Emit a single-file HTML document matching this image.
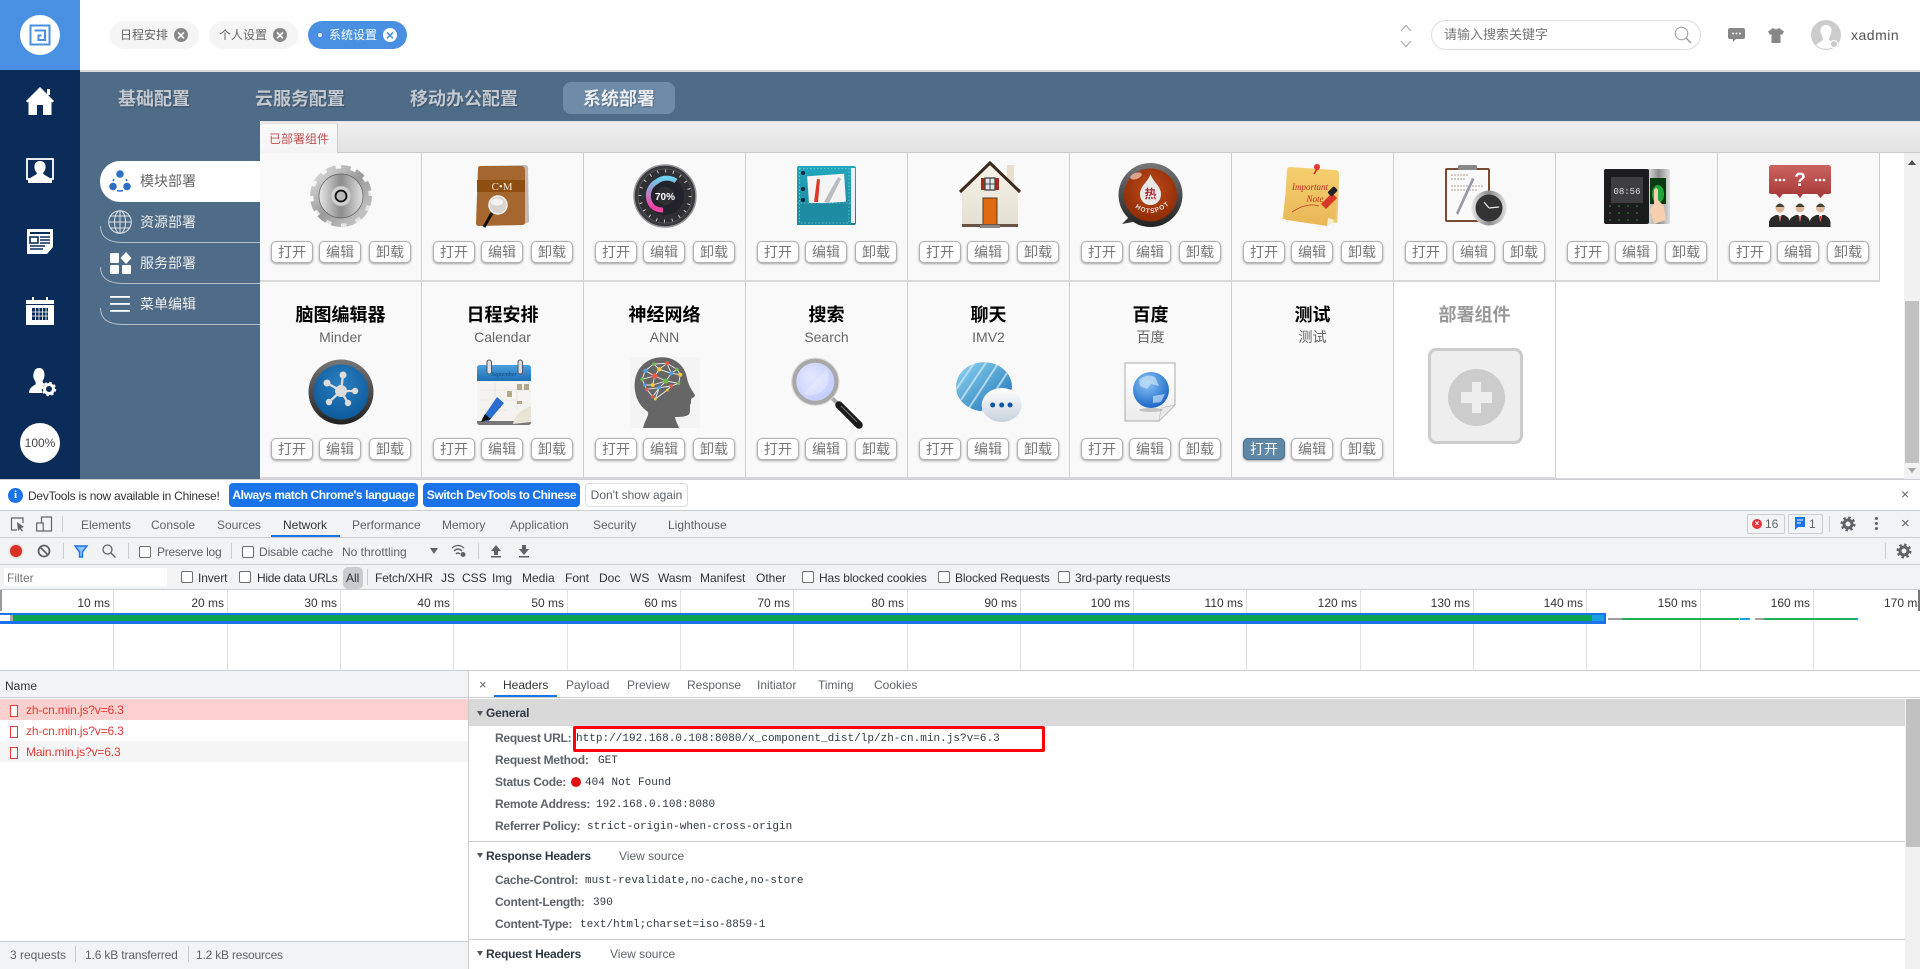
<!DOCTYPE html>
<html lang="zh-CN"><head><meta charset="utf-8"><title>系统部署</title>
<style>
*{box-sizing:border-box}
html,body{margin:0;padding:0;width:1920px;height:969px;overflow:hidden;background:#fff;font-family:"Liberation Sans","Noto Sans CJK SC",sans-serif}
.a,.t{position:absolute}
.t{white-space:nowrap;line-height:16px;height:16px}
svg{position:absolute;overflow:visible}
.d{font-size:12px;color:#5f6368}
.k{font-size:12px;color:#5f6368;font-weight:bold;letter-spacing:-.25px}
.m{font-family:"Liberation Mono","Noto Sans CJK SC",monospace;font-size:11px;color:#303942;margin-top:1px;letter-spacing:.02px}
.hb{font-size:12px;color:#303942;font-weight:bold;letter-spacing:-.2px}
.cell{position:absolute;width:162px;background:#f9f9f9;border-right:1px solid #cfcfcf;border-bottom:2px solid #d8d8d8}
.r1{top:153px;height:129px}
.r2{top:282px;height:197px}
.b{position:absolute;width:42px;height:22px;border:1px solid #b0b0b0;border-radius:5px;background:#fff;box-shadow:0 1px 2px rgba(0,0,0,.35);font-size:14px;line-height:20px;color:#777;text-align:center}
.r1 .b{top:88px}
.r2 .b{top:156px}
.x1{left:11px}.x2{left:59px}.x3{left:109px}
.ti{position:absolute;top:21px;left:0;width:161px;text-align:center;font-size:18px;font-weight:bold;line-height:24px;color:#000}
.su{position:absolute;top:47px;left:0;width:161px;text-align:center;font-size:14px;line-height:16px;color:#666}
.ic{left:45px;top:7px;width:72px;height:72px}
.r2 .ic{top:74px}
.nv{position:absolute;top:87px;font-size:18px;font-weight:bold;line-height:24px;color:#c3c9cf;white-space:nowrap;text-shadow:1px 1px 1px rgba(0,0,0,.25)}
.mt{position:absolute;left:140px;font-size:14px;line-height:18px;color:#eee;white-space:nowrap}
.tb{position:absolute;top:21px;height:28px;border-radius:14px;background:#f5f5f5}
.tb span{position:absolute;top:6px;font-size:12px;line-height:16px;color:#666;white-space:nowrap}
.tb i{position:absolute;top:7px;width:14px;height:14px;border-radius:50%;background:#888;color:#fff;font:bold 14px/14px "Liberation Sans",sans-serif;text-align:center}
.cb{position:absolute;width:12px;height:12px;margin:1px 0 0 1px;border:1px solid #6e6e6e;border-radius:2px;background:#fff}
.sp{position:absolute;width:1px;background:#ccc}
.lb{position:absolute;top:595px;width:57px;text-align:right;font-size:12px;line-height:16px;color:#333}
.tk{position:absolute;top:590px;height:80px;width:1px;background:#e0e0e0}
.btn{position:absolute;top:483px;height:24px;border-radius:4px;background:#1a73e8;color:#fff;font-size:12px;font-weight:bold;line-height:24px;text-align:center;white-space:nowrap;letter-spacing:-.4px}
.nm{position:absolute;left:26px;font-size:12px;line-height:16px;color:#e53935;white-space:nowrap;letter-spacing:-.15px}
.bx{position:absolute;left:10px;width:8px;height:12px;border:1px solid #e53935;background:#fff}
.f{font-size:12px;color:#333;margin-top:1px;letter-spacing:-.12px}
</style></head>
<body>
<svg width="0" height="0" style="position:absolute"><defs>
<linearGradient id="metal" x1="0" y1="0" x2="1" y2="1"><stop offset="0" stop-color="#e2e2e2"/><stop offset=".5" stop-color="#9a9a9a"/><stop offset="1" stop-color="#cfcfcf"/></linearGradient>
<linearGradient id="metal2" x1="0" y1="0" x2="1" y2="0"><stop offset="0" stop-color="#e6e6e6"/><stop offset=".5" stop-color="#8c8c8c"/><stop offset="1" stop-color="#e0e0e0"/></linearGradient>
<linearGradient id="teal" x1="0" y1="0" x2="0" y2="1"><stop offset="0" stop-color="#23a8bf"/><stop offset="1" stop-color="#1b7f95"/></linearGradient>
<linearGradient id="pk" x1="0" y1="0" x2="0" y2="1"><stop offset="0" stop-color="#6cd0ee"/><stop offset="1" stop-color="#f043a8"/></linearGradient>
<radialGradient id="red" cx=".5" cy=".4" r=".6"><stop offset="0" stop-color="#c14a1c"/><stop offset="1" stop-color="#8f2c05"/></radialGradient>
<linearGradient id="rim" x1="0" y1="0" x2="0" y2="1"><stop offset="0" stop-color="#777"/><stop offset="1" stop-color="#222"/></linearGradient>
<linearGradient id="note" x1="0" y1="0" x2="0" y2="1"><stop offset="0" stop-color="#f6cf6e"/><stop offset="1" stop-color="#e8b757"/></linearGradient>
<linearGradient id="rd" x1="0" y1="0" x2="0" y2="1"><stop offset="0" stop-color="#cc6460"/><stop offset="1" stop-color="#a53836"/></linearGradient>
<radialGradient id="blu" cx=".5" cy=".35" r=".65"><stop offset="0" stop-color="#2b7fc0"/><stop offset="1" stop-color="#0c5a9c"/></radialGradient>
<linearGradient id="calh" x1="0" y1="0" x2="0" y2="1"><stop offset="0" stop-color="#4a9fdc"/><stop offset="1" stop-color="#1e6fb5"/></linearGradient>
<radialGradient id="lens" cx=".4" cy=".4" r=".7"><stop offset="0" stop-color="#e6e8ff"/><stop offset="1" stop-color="#bcc8fa"/></radialGradient>
<linearGradient id="ball" x1="0" y1="0" x2="1" y2="1"><stop offset="0" stop-color="#8fd6f5"/><stop offset="1" stop-color="#1a6fb0"/></linearGradient>
<linearGradient id="bub" x1="0" y1="0" x2="0" y2="1"><stop offset="0" stop-color="#fff"/><stop offset="1" stop-color="#c8d2dc"/></linearGradient>
<radialGradient id="glob" cx=".4" cy=".3" r=".75"><stop offset="0" stop-color="#8cc6f5"/><stop offset="1" stop-color="#1460c4"/></radialGradient>
<linearGradient id="grey" x1="0" y1="0" x2="0" y2="1"><stop offset="0" stop-color="#fff"/><stop offset="1" stop-color="#ececec"/></linearGradient>
<linearGradient id="wall" x1="0" y1="0" x2="0" y2="1"><stop offset="0" stop-color="#f8f4ea"/><stop offset="1" stop-color="#e4dfd2"/></linearGradient>
</defs></svg>

<!-- sidebar -->
<div class="a" style="left:0;top:0;width:80px;height:480px;background:#0b2c58"></div>
<div class="a" style="left:0;top:0;width:80px;height:70px;background:#4a90e2"></div>
<div class="a" style="left:20px;top:15px;width:40px;height:40px;border-radius:50%;background:#fff"></div>
<svg style="left:29px;top:24px" width="22" height="22" viewBox="0 0 22 22" fill="none" stroke="#4a90e2" stroke-width="2"><rect x="1.500" y="1.500" width="19" height="19"/><path d="M5.500 6.500H16V16H9.500V11.500H12.500"/></svg>
<svg style="left:26px;top:87px" width="28" height="28" viewBox="0 0 28 28" fill="#fff"><path d="M14 0L28 14L26.500 15.500L25.500 15V28H17V18H11V28H2.500V15L1.500 15.500L0 14Z"/><rect x="21" y="2" width="3" height="6"/></svg>
<svg style="left:26px;top:158px" width="28" height="26" viewBox="0 0 28 26"><rect x="1" y="1" width="26" height="20" fill="none" stroke="#fff" stroke-width="1.800"/><path d="M14 3C18 3 20 6 19.500 10C19.300 12 18 14 17 15C17 17 22 18 26 22V25H2V22C6 18 11 17 11 15C10 14 8.700 12 8.500 10C8 6 10 3 14 3Z" fill="#fff"/></svg>
<svg style="left:27px;top:228px" width="26" height="26" viewBox="0 0 26 26"><path d="M0 1H26V19L20 26H0Z" fill="#fff"/><rect x="3" y="4" width="20" height="2" fill="#0b2c58"/><rect x="3" y="9" width="8" height="6" fill="none" stroke="#0b2c58" stroke-width="1.600"/><path d="M13 9H23M13 12H23M13 15H23M3 18H18M3 21H16" stroke="#0b2c58" stroke-width="1.400"/></svg>
<svg style="left:26px;top:297px" width="28" height="28" viewBox="0 0 28 28"><rect x="0" y="3" width="28" height="25" fill="#fff"/><rect x="6" y="0" width="2" height="5" fill="#fff"/><rect x="20" y="0" width="2" height="5" fill="#fff"/><rect x="0" y="7" width="28" height="1" fill="#0b2c58"/><g fill="#0b2c58"><rect x="6" y="11" width="16" height="12"/></g><path d="M9.500 11V23M13 11V23M16.500 11V23M20 11V23M6 15H22M6 19H22" stroke="#fff" stroke-width=".8"/></svg>
<svg style="left:29px;top:368px" width="27" height="28" viewBox="0 0 27 28"><path d="M10 0C14 0 15.500 3 15.500 7C15.500 10 14 12 13.500 13.500C13.500 15 15 15.500 16.500 16.300C13 18 12 22 13.500 25H0C0 21 2 19 6.500 16.500C7 15 6.500 13.500 5.500 12C4.500 10 4 8.500 4.500 6C5 2 7 0 10 0Z" fill="#fff"/><circle cx="20" cy="21" r="4.500" fill="none" stroke="#fff" stroke-width="3"/><circle cx="20" cy="21" r="6.200" fill="none" stroke="#fff" stroke-width="2" stroke-dasharray="2.500 2.370"/></svg>
<div class="a" style="left:20px;top:423px;width:40px;height:40px;border-radius:50%;background:#fff;text-align:center;font-size:12px;line-height:40px;color:#444">100%</div>

<!-- header -->
<div class="a" style="left:80px;top:70px;width:1840px;height:2px;background:#dcdcdc"></div>
<div class="tb" style="left:110px;width:89px"><span style="left:10px">日程安排</span><i style="left:64px">×</i></div>
<div class="tb" style="left:209px;width:89px"><span style="left:10px">个人设置</span><i style="left:64px">×</i></div>
<div class="tb" style="left:308px;width:99px;background:#4a90e2"><span style="left:21px;color:#fff">系统设置</span><b class="a" style="left:10px;top:12px;width:4px;height:4px;border-radius:50%;background:#fff"></b><i style="left:75px;background:#fff;color:#4a90e2">×</i></div>
<svg style="left:1400px;top:23px" width="12" height="26" viewBox="0 0 12 26" fill="none" stroke="#aaa" stroke-width="1.200"><path d="M1 8L6 2.500L11 8M1 18L6 23.500L11 18"/></svg>
<div class="a" style="left:1431px;top:20px;width:270px;height:30px;border:1px solid #ddd;border-radius:15px;background:#fff"></div>
<div class="t" style="left:1444px;top:27px;font-size:13px;color:#777">请输入搜索关键字</div>
<svg style="left:1674px;top:26px" width="18" height="18" viewBox="0 0 18 18" fill="none" stroke="#999" stroke-width="1"><circle cx="7.500" cy="7.500" r="6.300"/><path d="M12 12L17 17" stroke-width="1.400"/></svg>
<svg style="left:1728px;top:28px" width="17" height="15" viewBox="0 0 17 15"><path d="M2 0H15Q17 0 17 2V9Q17 11 15 11H8L5 14V11H2Q0 11 0 9V2Q0 0 2 0Z" fill="#888"/><g fill="#fff"><circle cx="5" cy="5.500" r="1"/><circle cx="8.500" cy="5.500" r="1"/><circle cx="12" cy="5.500" r="1"/></g></svg>
<svg style="left:1768px;top:28px" width="16" height="15" viewBox="0 0 16 15"><path d="M5 0L8 1.500L11 0L16 3.500L14 7L12.500 6V15H3.500V6L2 7L0 3.500Z" fill="#888"/></svg>
<svg style="left:1811px;top:20px" width="30" height="30" viewBox="0 0 30 30"><circle cx="15" cy="15" r="15" fill="#ccc"/><path d="M15 5C19 5 21 8 20.500 12C20 15 18 17 18 19C18 21 22 22 25 25A15 15 0 0 1 5 25C8 22 12 21 12 19C12 17 10 15 9.500 12C9 8 11 5 15 5Z" fill="#fff"/><circle cx="23" cy="24" r="3.500" fill="#ccc" stroke="#fff"/></svg>
<div class="t" style="left:1851px;top:27px;font-size:14px;color:#555;letter-spacing:.5px">xadmin</div>

<!-- nav band -->
<div class="a" style="left:80px;top:72px;width:1840px;height:49px;background:#4e6b87"></div>
<div class="a" style="left:80px;top:121px;width:180px;height:359px;background:#4e6b87"></div>
<div class="nv" style="left:118px">基础配置</div>
<div class="nv" style="left:255px">云服务配置</div>
<div class="nv" style="left:410px">移动办公配置</div>
<div class="a" style="left:563px;top:82px;width:112px;height:32px;border-radius:8px;background:#6e8ba8"></div>
<div class="nv" style="left:583px;color:#eceff2">系统部署</div>

<!-- side menu -->
<svg style="left:100px;top:202px" width="160" height="124" viewBox="0 0 160 124" fill="none" stroke="#b4bfca" stroke-width="1"><path d="M.5 24Q.5 40 22 40.500H160M.5 65Q.5 81 22 81.500H160M.5 106Q.5 122 22 122.500H160"/></svg>
<div class="a" style="left:100px;top:161px;width:160px;height:41px;background:#fff;border-radius:20px 0 0 20px"></div>
<svg style="left:109px;top:170px" width="22" height="22" viewBox="0 0 22 22"><g fill="#2d6fc1"><circle cx="11" cy="4" r="3.800"/><circle cx="4" cy="16.500" r="3.800"/><circle cx="18" cy="16.500" r="3.800"/></g><path d="M5 9A9 9 0 0 0 4 11M17 9A9 9 0 0 1 18 11M8 20.500A9 9 0 0 0 14 20.500" stroke="#2d6fc1" fill="none" stroke-width="1.500"/></svg>
<div class="mt" style="top:172px;color:#666">模块部署</div>
<svg style="left:108px;top:210px" width="24" height="24" viewBox="0 0 24 24" fill="none" stroke="#dfe4ea" stroke-width="1"><circle cx="12" cy="12" r="11.300"/><ellipse cx="12" cy="12" rx="5.500" ry="11.300"/><path d="M12 .7V23.300M.7 12H23.300M2.500 6H21.500M2.500 18H21.500"/></svg>
<div class="mt" style="top:213px">资源部署</div>
<svg style="left:110px;top:252px" width="22" height="22" viewBox="0 0 22 22" fill="#fff"><rect x="0" y="1" width="9" height="10" rx="1"/><path d="M16 0L21.500 6L16 12L10.500 6Z"/><rect x="0" y="13" width="9" height="9" rx="1"/><rect x="12" y="13" width="9" height="9" rx="1"/></svg>
<div class="mt" style="top:254px">服务部署</div>
<svg style="left:110px;top:296px" width="20" height="16" viewBox="0 0 20 16" fill="#fff"><rect y="0" width="20" height="1.800"/><rect y="7" width="20" height="1.800"/><rect y="14" width="20" height="1.800"/></svg>
<div class="mt" style="top:295px">菜单编辑</div>

<!-- content strip -->
<div class="a" style="left:260px;top:121px;width:1660px;height:32px;background:linear-gradient(#efefef,#e3e3e3);border-top:1px solid #ddd;border-bottom:1px solid #ccc;border-top-left-radius:4px"></div>
<div class="a" style="left:260px;top:123px;width:78px;height:30px;background:linear-gradient(#fafafa,#f4f4f4);border-right:1px solid #ccc;border-top:1px solid #ddd;border-top-left-radius:4px;font-size:12px;line-height:30px;color:#c0504d;padding-left:9px;white-space:nowrap">已部署组件</div>

<!-- row 1 -->
<div class="cell r1" style="left:260px"><svg class="ic" viewBox="0 0 72 72"><circle cx="37" cy="38" r="29" fill="#ccc" opacity=".45"/><circle cx="36" cy="36" r="28.500" fill="none" stroke="url(#metal)" stroke-width="5" stroke-dasharray="9.500 5.420"/><circle cx="36" cy="36" r="27.500" fill="url(#metal)"/><circle cx="36" cy="36" r="22" fill="url(#metal2)" stroke="#666" stroke-width=".7"/><circle cx="36" cy="36" r="10" fill="#d0d0d0" stroke="#aaa" stroke-width=".5"/><circle cx="36" cy="36" r="5.500" fill="#bbb" stroke="#111" stroke-width="1.800"/></svg><div class="b x1">打开</div><div class="b x2">编辑</div><div class="b x3">卸载</div></div>

<div class="cell r1" style="left:422px"><svg class="ic" viewBox="0 0 72 72"><path d="M12 6L58 5Q62 6 61 10L62 62L55 65Z" fill="#bbb"/><path d="M11 8Q11 6 14 6L55 6Q58 7 58 10L58 62Q58 65 55 65L12 66Q9 66 9 63Z" fill="#a5672f"/><rect x="10" y="20" width="48" height="12" fill="#8e4d11"/><text x="35" y="30" font-family="Liberation Serif,serif" font-size="11" fill="#f2ead8" text-anchor="middle">C•M</text><path d="M25 53L17 67" stroke="#111" stroke-width="3"/><circle cx="31" cy="45" r="9" fill="#d8d4d0" stroke="#f2f2f2" stroke-width="1.500"/><ellipse cx="30" cy="42" rx="6" ry="3.500" fill="#f4f2f0"/></svg><div class="b x1">打开</div><div class="b x2">编辑</div><div class="b x3">卸载</div></div>

<div class="cell r1" style="left:584px"><svg class="ic" viewBox="0 0 72 72"><circle cx="36" cy="36" r="31" fill="#3a3a3e" stroke="#999" stroke-width="1.500"/><circle cx="36" cy="36" r="27" fill="#2e2e33" stroke="#666" stroke-width=".6"/><circle cx="36" cy="36" r="25" fill="none" stroke="#ccc" stroke-width="3" stroke-dasharray="1 6.850"/><circle cx="36" cy="36" r="14" fill="none" stroke="#22222a" stroke-width="10"/><path d="M47 21A16 16 0 0 0 28 21.500A16 16 0 0 0 24 47" fill="none" stroke="url(#pk)" stroke-width="5"/><path d="M24 47A16 16 0 0 0 34 50" fill="none" stroke="#f043a8" stroke-width="5"/><text x="36" y="40" font-size="10" font-weight="bold" fill="#fff" text-anchor="middle">70%</text></svg><div class="b x1">打开</div><div class="b x2">编辑</div><div class="b x3">卸载</div></div>

<div class="cell r1" style="left:746px"><svg class="ic" viewBox="0 0 72 72"><rect x="6" y="6" width="59" height="59" rx="2" fill="url(#teal)"/><rect x="60" y="8" width="4" height="55" fill="#eef"/><rect x="17" y="15" width="37" height="28" fill="#f4f4f4" transform="rotate(-4 35 28)"/><path d="M23 42L26 19L29 19.500L27 42Z" fill="#d83a2a"/><path d="M33 42L47 17L50 19L38 43Z" fill="#b8bcc0"/><rect x="6" y="43" width="54" height="22" fill="#1d8ba2"/><path d="M8.500 8.500H58V63H8.500Z M6 43H60" fill="none" stroke="#a8dfe8" stroke-width=".6" stroke-dasharray="1.500 2"/><circle cx="12" cy="13" r="2" fill="#123"/><circle cx="12" cy="29" r="2" fill="#123"/><circle cx="12" cy="40" r="2" fill="#123"/></svg><div class="b x1">打开</div><div class="b x2">编辑</div><div class="b x3">卸载</div></div>

<div class="cell r1" style="left:908px"><svg class="ic" viewBox="0 0 72 72"><rect x="54" y="5" width="7" height="24" fill="#e8e0cc"/><path d="M37 4L65 32V66H9V32Z" fill="url(#wall)"/><path d="M7 32L37 3L67 32" fill="none" stroke="#3c2a1e" stroke-width="3"/><rect x="30" y="38" width="14" height="27" fill="#e06a12" stroke="#5a3a20"/><rect x="28" y="18" width="4" height="12" fill="#a82a1a"/><rect x="42" y="18" width="4" height="12" fill="#a82a1a"/><rect x="32" y="18" width="10" height="12" fill="#dfe4e8" stroke="#444" stroke-width="1.300"/><path d="M37 18V30M32 24H42" stroke="#444"/><rect x="9" y="64" width="56" height="3" fill="#6b5344"/><rect x="27" y="65" width="20" height="3" fill="#888"/></svg><div class="b x1">打开</div><div class="b x2">编辑</div><div class="b x3">卸载</div></div>

<div class="cell r1" style="left:1070px"><svg class="ic" viewBox="0 0 72 72"><path d="M7 64L16 55L18 62Z" fill="#333"/><circle cx="35.500" cy="35" r="32" fill="url(#rim)"/><circle cx="35.500" cy="35" r="26.500" fill="url(#red)"/><ellipse cx="21" cy="16" rx="6" ry="3" fill="#f2c8b4" opacity=".75" transform="rotate(-20 21 16)"/><path d="M35.500 14C38 22 46 26 46 34C46 41 41 45 35.500 45C30 45 25 41 25 34C25 26 33 22 35.500 14Z" fill="#e8e8e8"/><text x="35.500" y="38" font-size="12" font-weight="bold" fill="#b52a3a" text-anchor="middle" font-family="Noto Sans CJK SC,sans-serif">热</text><path id="hp" d="M16 44Q35 62 55 44" fill="none"/><text font-size="6.500" font-weight="bold" fill="#f2e6de" letter-spacing="1"><textPath href="#hp" startOffset="12%">HOTSPOT</textPath></text></svg><div class="b x1">打开</div><div class="b x2">编辑</div><div class="b x3">卸载</div></div>

<div class="cell r1" style="left:1232px"><svg class="ic" viewBox="0 0 72 72"><path d="M9 12L60 14L63 60L8 62Z" fill="#eec772" transform="rotate(6 35 36)"/><path d="M10 10Q10 7 13 7L58 10Q62 10 62 14L58 60L50 66L10 60Q7 60 7 56Z" fill="url(#note)"/><path d="M50 66L58 60L51 58Z" fill="#f7edc9"/><circle cx="40" cy="7" r="3" fill="#e33"/><path d="M40 9L37 14" stroke="#c22" stroke-width="1.500"/><text x="33" y="30" font-family="Liberation Serif,serif" font-style="italic" font-size="9" fill="#c22e1e" text-anchor="middle">Important</text><text x="38" y="42" font-family="Liberation Serif,serif" font-style="italic" font-size="9" fill="#c22e1e" text-anchor="middle">Note</text><path d="M15 52Q30 42 42 46" fill="none" stroke="#c6432e" stroke-width=".8"/><path d="M44 44L55 33L60 38L49 49Z" fill="#d8362a"/><rect x="53" y="27" width="6" height="9" rx="1.500" fill="#222" transform="rotate(45 56 31)"/></svg><div class="b x1">打开</div><div class="b x2">编辑</div><div class="b x3">卸载</div></div>

<div class="cell r1" style="left:1394px"><svg class="ic" viewBox="0 0 72 72"><rect x="6" y="8" width="45" height="54" rx="2" fill="#7a4a35"/><rect x="8" y="10" width="41" height="50" fill="#fafafa"/><rect x="19" y="5" width="19" height="5" rx="1.500" fill="#888"/><path d="M12 15H30M12 19H26M12 26H44M12 30H38" stroke="#cbbcb0" stroke-width="1.500" stroke-dasharray="2 1"/><path d="M17 53L33 18L35.500 19L19 55Z" fill="#99a"/><circle cx="50" cy="48" r="17.500" fill="url(#metal2)"/><circle cx="50" cy="48" r="13.500" fill="#333"/><path d="M50 48L45 42M50 48L60 47" stroke="#eee" stroke-width="1.200"/></svg><div class="b x1">打开</div><div class="b x2">编辑</div><div class="b x3">卸载</div></div>

<div class="cell r1" style="left:1556px"><svg class="ic" viewBox="0 0 72 72"><rect x="46" y="9" width="23" height="55" rx="2" fill="url(#metal2)"/><rect x="3" y="9" width="45" height="55" rx="2" fill="#1c1c1e"/><rect x="10" y="17" width="32" height="26" fill="#3e3e40"/><text x="26" y="34" font-size="9" fill="#ddd" text-anchor="middle" font-family="Liberation Mono,monospace">08:56</text><g fill="#2ca02c"><circle cx="9" cy="46" r=".8"/><circle cx="18" cy="46" r=".8"/><circle cx="27" cy="46" r=".8"/><circle cx="36" cy="46" r=".8"/><circle cx="9" cy="53" r=".8"/><circle cx="18" cy="53" r=".8"/><circle cx="27" cy="53" r=".8"/><circle cx="36" cy="53" r=".8"/><circle cx="9" cy="60" r=".8"/><circle cx="18" cy="60" r=".8"/><circle cx="27" cy="60" r=".8"/><circle cx="36" cy="60" r=".8"/></g><rect x="49" y="18" width="16" height="26" fill="#0a3a12"/><ellipse cx="57" cy="34" rx="6" ry="9" fill="#1fa83a"/><path d="M53 30Q55 26 57 30L57 40L63 46L65 60L53 64L49 50L53 44Z" fill="#f6cfae"/></svg><div class="b x1">打开</div><div class="b x2">编辑</div><div class="b x3">卸载</div></div>

<div class="cell r1" style="left:1718px"><svg class="ic" viewBox="0 0 72 72"><path d="M8 5H66Q68 5 68 8V32Q68 34 66 34H61L57.500 38L54 34H40L37 38L34 34H20L16.500 38L13 34H8Q6 34 6 32V8Q6 5 8 5Z" fill="url(#rd)"/><g fill="#fff"><circle cx="13" cy="20" r="1.300"/><circle cx="17" cy="20" r="1.300"/><circle cx="21" cy="20" r="1.300"/><circle cx="53" cy="20" r="1.300"/><circle cx="57" cy="20" r="1.300"/><circle cx="61" cy="20" r="1.300"/></g><text x="37" y="26" font-size="19" font-weight="bold" fill="#fff" text-anchor="middle">?</text><g><path d="M6 67V62Q7 57 13 55H21Q26 57 27 62V67Z" fill="#2a2a2a"/><path d="M15.500 55H18.500L17 62Z" fill="#fff"/><path d="M16.300 56H17.700L17 62Z" fill="#d62020"/><circle cx="17" cy="48" r="4.500" fill="#dcb79a"/><path d="M12.500 47Q17 40 21.500 47" fill="#443"/></g><g transform="translate(20 0)"><path d="M6 67V62Q7 57 13 55H21Q26 57 27 62V67Z" fill="#2a2a2a"/><path d="M15.500 55H18.500L17 62Z" fill="#fff"/><path d="M16.300 56H17.700L17 62Z" fill="#d62020"/><circle cx="17" cy="48" r="4.500" fill="#dcb79a"/><path d="M12.500 47Q17 40 21.500 47" fill="#443"/></g><g transform="translate(40.500 0)"><path d="M6 67V62Q7 57 13 55H21Q26 57 27 62V67Z" fill="#2a2a2a"/><path d="M15.500 55H18.500L17 62Z" fill="#fff"/><path d="M16.300 56H17.700L17 62Z" fill="#d62020"/><circle cx="17" cy="48" r="4.500" fill="#dcb79a"/><path d="M12.500 47Q17 40 21.500 47" fill="#443"/></g></svg><div class="b x1">打开</div><div class="b x2">编辑</div><div class="b x3">卸载</div></div>

<!-- row 2 -->
<div class="cell r2" style="left:260px"><div class="ti">脑图编辑器</div><div class="su">Minder</div><svg class="ic" viewBox="0 0 72 72"><circle cx="36" cy="36" r="32.500" fill="url(#rim)"/><circle cx="36" cy="36" r="27.500" fill="url(#blu)"/><g stroke="#dcdcdc" stroke-width="2.300"><path d="M36 35L38 19M36 35L22 27M36 35L50 35M36 35L24 46M36 35L43 47"/></g><g fill="#dcdcdc"><circle cx="36" cy="35" r="6"/><circle cx="38" cy="19" r="3.500"/><circle cx="22" cy="27" r="3.500"/><circle cx="50" cy="35" r="3.200"/><circle cx="24" cy="46" r="3.200"/><circle cx="43" cy="47" r="3.200"/></g></svg><div class="b x1">打开</div><div class="b x2">编辑</div><div class="b x3">卸载</div></div>

<div class="cell r2" style="left:422px"><div class="ti">日程安排</div><div class="su">Calendar</div><svg class="ic" viewBox="0 0 72 72"><rect x="10" y="9" width="54" height="60" rx="3" fill="#f4f3ef"/><path d="M10 65H64V66Q64 69 61 69H13Q10 69 10 66Z" fill="#777"/><path d="M10 25V12Q10 9 13 9H61Q64 9 64 12V25Z" fill="url(#calh)"/><text x="37" y="20" font-family="Liberation Serif,serif" font-style="italic" font-size="6" fill="#124a80" text-anchor="middle">September</text><rect x="20" y="4" width="4.500" height="14" rx="2.200" fill="#ddd" stroke="#556"/><rect x="51" y="4" width="4.500" height="14" rx="2.200" fill="#ddd" stroke="#556"/><path d="M12 34H62M12 44H50M12 54H40M28 27V62M50 27V54" stroke="#ddd" stroke-width=".6"/><g fill="#b4a88a"><rect x="50" y="28" width="5" height="6"/><rect x="57" y="28" width="5" height="6"/><rect x="40" y="35" width="5" height="6"/><rect x="50" y="45" width="5" height="3"/><rect x="29" y="46" width="5" height="6"/></g><path d="M46 68Q49 55 64 50V66Z" fill="#eae4d6"/><path d="M15 63L30 41L37 47L21 66Z" fill="#2a6fd0"/><path d="M14 66L18 58L24 63Z" fill="#111"/></svg><div class="b x1">打开</div><div class="b x2">编辑</div><div class="b x3">卸载</div></div>

<div class="cell r2" style="left:584px"><div class="ti">神经网络</div><div class="su">ANN</div><svg class="ic" viewBox="0 0 72 72"><rect x="1" y="1" width="70" height="71" fill="#f4f4f4"/><path d="M14 72C16 64 20 60 19 56C10 50 5 40 5.700 27C7 10 20 1.300 33 1.300C46 1.300 56 10 58 22C59 28 62 33 66 39C66 41 63 42 62 43L62 47L61 49L61 55C61 60 56 61 46 61C47 66 49 69 50 72Z" fill="#666"/><g stroke="#eee" stroke-width=".9" fill="none"><path d="M16.300 14.700L24.700 8L38 7.300L48 13.300L51.300 18.700L49.700 27.300L42.300 30L30.300 31.700L17.700 33.300L15.700 29L13 23.300L16.300 14.700L25.700 20L30.300 13.300L42.300 17.300L37 25L25.700 20L23.700 29L37 25L30.300 31.700L23.700 40.700L17.700 33.300M24.700 8L30.300 13.300L38 7.300L42.300 17.300L48 13.300M42.300 17.300L51.300 18.700M37 25L49.700 27.300M13 23.300L25.700 20M23.700 29L15.700 29M38.300 34L42.300 30M38.300 34L26.300 43L30.300 31.700"/></g><g><circle cx="16.300" cy="14.700" r="2" fill="#4aa3ea"/><circle cx="24.700" cy="8" r="1.600" fill="#6cbb4a"/><circle cx="38" cy="7.300" r="2" fill="#ef5a4a"/><circle cx="48" cy="13.300" r="1.600" fill="#6cbb4a"/><circle cx="51.300" cy="18.700" r="2" fill="#f4c83c"/><circle cx="49.700" cy="27.300" r="1.600" fill="#6cbb4a"/><circle cx="42.300" cy="17.300" r="2" fill="#4aa3ea"/><circle cx="30.300" cy="13.300" r="2.200" fill="#f4c83c"/><circle cx="25.700" cy="20" r="2.800" fill="#ef5a4a"/><circle cx="13" cy="23.300" r="1.700" fill="#6cbb4a"/><circle cx="15.700" cy="29" r="1.800" fill="#4aa3ea"/><circle cx="23.700" cy="29" r="2" fill="#f4c83c"/><circle cx="37" cy="25" r="2.600" fill="#6cbb4a"/><circle cx="42.300" cy="30" r="1.700" fill="#ef5a4a"/><circle cx="30.300" cy="31.700" r="1.900" fill="#4aa3ea"/><circle cx="17.700" cy="33.300" r="1.800" fill="#ef5a4a"/><circle cx="23.700" cy="40.700" r="1.500" fill="#ef5a4a"/><circle cx="26.300" cy="43" r="1.500" fill="#f4c83c"/><circle cx="38.300" cy="34" r="1.400" fill="#f4c83c"/></g></svg><div class="b x1">打开</div><div class="b x2">编辑</div><div class="b x3">卸载</div></div>

<div class="cell r2" style="left:746px"><div class="ti">搜索</div><div class="su">Search</div><svg class="ic" viewBox="0 0 72 72"><path d="M41 42L49 50" stroke="#aaa" stroke-width="4"/><path d="M48 49L68 69" stroke="#1a1a1a" stroke-width="7.500" stroke-linecap="round"/><path d="M50 50L66 66" stroke="#777" stroke-width="1"/><circle cx="24.300" cy="25.700" r="21.500" fill="url(#lens)" stroke="#a8a8a8" stroke-width="5"/><circle cx="24.300" cy="25.700" r="23.500" fill="none" stroke="#ddd" stroke-width="1"/><path d="M12 38L36 13A18.500 18.500 0 0 1 12 38Z" fill="#fff" opacity=".25"/></svg><div class="b x1">打开</div><div class="b x2">编辑</div><div class="b x3">卸载</div></div>

<div class="cell r2" style="left:908px"><div class="ti">聊天</div><div class="su">IMV2</div><svg class="ic" viewBox="0 0 72 72"><defs><clipPath id="cb"><ellipse cx="31" cy="30.700" rx="28" ry="24.500"/></clipPath></defs><ellipse cx="31" cy="30.700" rx="28" ry="24.500" fill="url(#ball)"/><g clip-path="url(#cb)" stroke="#d0e8f6" stroke-width="2" opacity=".75"><path d="M0 38L26 0M8 44L36 2M16 52L46 6M26 60L56 14"/></g><path d="M60 32L61 42L55 36Z" fill="#ddd"/><ellipse cx="48.700" cy="49" rx="20" ry="17" fill="url(#bub)"/><g fill="#0d55a8"><circle cx="39.700" cy="49" r="2.500"/><circle cx="48.700" cy="49" r="2.500"/><circle cx="57" cy="49" r="2.500"/></g></svg><div class="b x1">打开</div><div class="b x2">编辑</div><div class="b x3">卸载</div></div>

<div class="cell r2" style="left:1070px"><div class="ti">百度</div><div class="su">百度</div><svg class="ic" viewBox="0 0 72 72"><path d="M10 7H60V49L44 65H10Z" fill="url(#grey)" stroke="#aaa"/><path d="M44 65L46 52L60 49Z" fill="#e8e8e8" stroke="#bbb" stroke-width=".6"/><ellipse cx="36" cy="54" rx="12" ry="2" fill="#999" opacity=".5"/><circle cx="36" cy="34" r="18" fill="url(#glob)"/><path d="M24 24Q31 17 40 21L44 30L36 28L32 33L25 30Z M38 40L50 38L46 46L38 47Z" fill="#cfe6f9" opacity=".65"/></svg><div class="b x1">打开</div><div class="b x2">编辑</div><div class="b x3">卸载</div></div>

<div class="cell r2" style="left:1232px"><div class="ti">测试</div><div class="su">测试</div><div class="b x1" style="background:#5f87a6;color:#fff;border-color:#4e7390">打开</div><div class="b x2">编辑</div><div class="b x3">卸载</div></div>

<div class="cell r2" style="left:1394px;background:#fff"><div class="ti" style="color:#999">部署组件</div></div>
<div class="a" style="left:1428px;top:348px;width:95px;height:96px;border:3px solid #ccc;border-radius:8px;background:#eee"></div>
<div class="a" style="left:1448px;top:369px;width:57px;height:57px;border-radius:50%;background:#ccc"></div>
<div class="a" style="left:1461px;top:392px;width:31px;height:11px;background:#eee"></div>
<div class="a" style="left:1472px;top:382px;width:9px;height:31px;background:#eee"></div>

<!-- bottom line of upper page -->
<div class="a" style="left:1556px;top:478px;width:348px;height:2px;background:#d8d8d8"></div>

<!-- page scrollbar -->
<div class="a" style="left:1904px;top:153px;width:16px;height:326px;background:#f1f1f1"></div>
<div class="a" style="left:1905px;top:301px;width:14px;height:162px;background:#c1c1c1"></div>
<div class="a" style="left:1908px;top:160px;border:4px solid transparent;border-bottom:5px solid #505050;border-top:0"></div>
<div class="a" style="left:1908px;top:468px;border:4px solid transparent;border-top:5px solid #a3a3a3;border-bottom:0"></div>

<!-- ================= DevTools ================== -->
<div class="a" style="left:0;top:479px;width:1920px;height:1px;background:#cacdd1"></div>
<div class="a" style="left:0;top:480px;width:1920px;height:30px;background:#fff"></div>
<div class="a" style="left:8px;top:488px;width:15px;height:15px;border-radius:50%;background:#1a73e8;color:#fff;font:bold 11px/15px 'Liberation Serif',serif;text-align:center">i</div>
<div class="t" style="left:28px;top:488px;font-size:12px;color:#333;letter-spacing:-.25px">DevTools is now available in Chinese!</div>
<div class="btn" style="left:229px;width:189px">Always match Chrome's language</div>
<div class="btn" style="left:423px;width:157px">Switch DevTools to Chinese</div>
<div class="btn" style="left:585px;width:103px;background:#fff;color:#5f6368;font-weight:normal;border:1px solid #dadce0;line-height:22px;letter-spacing:0">Don't show again</div>
<div class="t" style="left:1901px;top:486px;font-size:14px;color:#5f6368">×</div>
<div class="a" style="left:0;top:510px;width:1920px;height:1px;background:#cacdd1"></div>

<div class="a" style="left:0;top:511px;width:1920px;height:79px;background:#f1f3f4"></div>
<div class="a" style="left:0;top:537px;width:1920px;height:1px;background:#cacdd1"></div>
<div class="a" style="left:0;top:564px;width:1920px;height:1px;background:#cacdd1"></div>
<div class="a" style="left:0;top:589px;width:1920px;height:1px;background:#cacdd1"></div>

<svg style="left:10px;top:516px" width="16" height="16" viewBox="0 0 16 16" fill="none" stroke="#5f6368" stroke-width="1.200"><path d="M7 14H1.500V2H13V7"/><path d="M7 6L14 11L11 12L13 15L11.500 15.500L10 13L8 15Z" fill="#5f6368" stroke="none"/></svg>
<svg style="left:36px;top:516px" width="16" height="16" viewBox="0 0 16 16" fill="none" stroke="#5f6368" stroke-width="1.200"><rect x="5.500" y="1" width="10" height="14"/><rect x=".7" y="7" width="6.500" height="8" fill="#f1f3f4"/></svg>
<div class="sp" style="left:62px;top:516px;height:16px"></div>
<div class="t d" style="left:81px;top:517px">Elements</div>
<div class="t d" style="left:151px;top:517px">Console</div>
<div class="t d" style="left:217px;top:517px">Sources</div>
<div class="t" style="left:283px;top:517px;font-size:12px;color:#333">Network</div>
<div class="a" style="left:271px;top:535px;width:69px;height:2px;background:#1a73e8"></div>
<div class="t d" style="left:352px;top:517px">Performance</div>
<div class="t d" style="left:442px;top:517px">Memory</div>
<div class="t d" style="left:510px;top:517px">Application</div>
<div class="t d" style="left:593px;top:517px">Security</div>
<div class="t d" style="left:668px;top:517px">Lighthouse</div>

<div class="a" style="left:1747px;top:514px;width:38px;height:20px;border:1px solid #cacdd1;border-radius:2px"></div>
<div class="a" style="left:1752px;top:519px;width:10px;height:10px;border-radius:50%;background:#e8333a;color:#fff;font:bold 8px/10px 'Liberation Sans',sans-serif;text-align:center">×</div>
<div class="t d" style="left:1765px;top:516px">16</div>
<div class="a" style="left:1788px;top:514px;width:35px;height:20px;border:1px solid #cacdd1;border-radius:2px"></div>
<svg style="left:1794px;top:517px" width="12" height="14" viewBox="0 0 12 14"><path d="M1 0H11V10H4L1 13Z" fill="#1a73e8"/><path d="M3 3H9M3 6H7" stroke="#fff"/></svg>
<div class="t d" style="left:1809px;top:516px">1</div>
<div class="sp" style="left:1829px;top:516px;height:16px"></div>
<svg style="left:1840px;top:516px" width="16" height="16" viewBox="0 0 16 16"><circle cx="8" cy="8" r="4" fill="none" stroke="#5f6368" stroke-width="3"/><circle cx="8" cy="8" r="6.200" fill="none" stroke="#5f6368" stroke-width="2.600" stroke-dasharray="2.400 2.470"/></svg>
<div class="a" style="left:1875px;top:517px;width:3px;height:3px;border-radius:50%;background:#5f6368;box-shadow:0 5px 0 #5f6368,0 10px 0 #5f6368"></div>
<div class="t" style="left:1901px;top:516px;font-size:15px;color:#5f6368">×</div>

<!-- toolbar -->
<div class="a" style="left:10px;top:545px;width:12px;height:12px;border-radius:50%;background:#d93025;box-shadow:0 0 2px #ea9a93"></div>
<svg style="left:37px;top:544px" width="14" height="14" viewBox="0 0 14 14" fill="none" stroke="#5f6368" stroke-width="1.800"><circle cx="7" cy="7" r="5.500"/><path d="M3 3L11 11"/></svg>
<div class="sp" style="left:63px;top:543px;height:16px"></div>
<svg style="left:74px;top:545px" width="14" height="13" viewBox="0 0 14 13"><path d="M1 1H13L8.500 7V12L5.500 12V7Z" fill="#8cc4f5" stroke="#1a73e8" stroke-width="1.400"/></svg>
<svg style="left:102px;top:544px" width="14" height="14" viewBox="0 0 14 14" fill="none" stroke="#5f6368" stroke-width="1.300"><circle cx="5.500" cy="5.500" r="4.500"/><path d="M9 9L13.500 13.500"/></svg>
<div class="sp" style="left:128px;top:543px;height:16px"></div>
<div class="cb" style="left:138px;top:545px"></div>
<div class="t d" style="left:157px;top:544px;letter-spacing:-.25px">Preserve log</div>
<div class="sp" style="left:231px;top:543px;height:16px"></div>
<div class="cb" style="left:241px;top:545px"></div>
<div class="t d" style="left:259px;top:544px;letter-spacing:-.1px">Disable cache</div>
<div class="t d" style="left:342px;top:544px">No throttling</div>
<div class="a" style="left:430px;top:548px;border:4px solid transparent;border-top:6px solid #5f6368;border-bottom:0"></div>
<svg style="left:451px;top:544px" width="16" height="14" viewBox="0 0 16 14" fill="none" stroke="#5f6368" stroke-width="1.300"><path d="M1 4Q7 -1 13 4M3 7Q7 3 11 7M5 10Q7 8 9 10"/><circle cx="12" cy="10.500" r="2.500" fill="#5f6368" stroke="none"/></svg>
<div class="sp" style="left:478px;top:543px;height:16px"></div>
<svg style="left:490px;top:544px" width="12" height="14" viewBox="0 0 12 14" fill="#5f6368"><path d="M6 1L11 7H8V11H4V7H1Z"/><rect x="1" y="12" width="10" height="1.500"/></svg>
<svg style="left:518px;top:544px" width="12" height="14" viewBox="0 0 12 14" fill="#5f6368"><path d="M4 1H8V5H11L6 11L1 5H4Z"/><rect x="1" y="12" width="10" height="1.500"/></svg>
<div class="sp" style="left:1885px;top:543px;height:16px"></div>
<svg style="left:1896px;top:543px" width="16" height="16" viewBox="0 0 16 16"><circle cx="8" cy="8" r="4" fill="none" stroke="#5f6368" stroke-width="3"/><circle cx="8" cy="8" r="6.200" fill="none" stroke="#5f6368" stroke-width="2.600" stroke-dasharray="2.400 2.470"/></svg>

<!-- filter row -->
<div class="a" style="left:4px;top:568px;width:163px;height:18px;background:#fff"></div>
<div class="t" style="left:7px;top:570px;font-size:12px;color:#757575">Filter</div>
<div class="cb" style="left:180px;top:570px"></div>
<div class="t f" style="left:198px;top:569px">Invert</div>
<div class="cb" style="left:238px;top:570px"></div>
<div class="t f" style="left:257px;top:569px;letter-spacing:-.3px">Hide data URLs</div>
<div class="a" style="left:343px;top:567px;width:20px;height:22px;border-radius:5px;background:#c8cbcf"></div>
<div class="t" style="left:346px;top:570px;font-size:12px;color:#333">All</div>
<div class="sp" style="left:367px;top:569px;height:16px"></div>
<div class="t" style="left:375px;top:570px;font-size:12px;color:#333;letter-spacing:-.1px">Fetch/XHR</div>
<div class="t" style="left:441px;top:570px;font-size:12px;color:#333">JS</div>
<div class="t" style="left:462px;top:570px;font-size:12px;color:#333">CSS</div>
<div class="t" style="left:492px;top:570px;font-size:12px;color:#333">Img</div>
<div class="t" style="left:522px;top:570px;font-size:12px;color:#333">Media</div>
<div class="t" style="left:565px;top:570px;font-size:12px;color:#333">Font</div>
<div class="t" style="left:599px;top:570px;font-size:12px;color:#333">Doc</div>
<div class="t" style="left:630px;top:570px;font-size:12px;color:#333">WS</div>
<div class="t" style="left:658px;top:570px;font-size:12px;color:#333">Wasm</div>
<div class="t" style="left:700px;top:570px;font-size:12px;color:#333">Manifest</div>
<div class="t" style="left:756px;top:570px;font-size:12px;color:#333">Other</div>
<div class="cb" style="left:801px;top:570px"></div>
<div class="t f" style="left:819px;top:569px">Has blocked cookies</div>
<div class="cb" style="left:937px;top:570px"></div>
<div class="t f" style="left:955px;top:569px">Blocked Requests</div>
<div class="cb" style="left:1057px;top:570px"></div>
<div class="t f" style="left:1075px;top:569px">3rd-party requests</div>

<!-- timeline -->
<div class="a" style="left:0;top:590px;width:1920px;height:80px;background:#fff;overflow:hidden"></div>
<div class="tk" style="left:113px"></div><div class="tk" style="left:227px"></div><div class="tk" style="left:340px"></div><div class="tk" style="left:453px"></div><div class="tk" style="left:567px"></div><div class="tk" style="left:680px"></div><div class="tk" style="left:793px"></div><div class="tk" style="left:907px"></div><div class="tk" style="left:1020px"></div><div class="tk" style="left:1133px"></div><div class="tk" style="left:1246px"></div><div class="tk" style="left:1360px"></div><div class="tk" style="left:1473px"></div><div class="tk" style="left:1586px"></div><div class="tk" style="left:1700px"></div><div class="tk" style="left:1813px"></div>
<div class="lb" style="left:53px">10 ms</div><div class="lb" style="left:167px">20 ms</div><div class="lb" style="left:280px">30 ms</div><div class="lb" style="left:393px">40 ms</div><div class="lb" style="left:507px">50 ms</div><div class="lb" style="left:620px">60 ms</div><div class="lb" style="left:733px">70 ms</div><div class="lb" style="left:847px">80 ms</div><div class="lb" style="left:960px">90 ms</div><div class="lb" style="left:1073px">100 ms</div><div class="lb" style="left:1186px">110 ms</div><div class="lb" style="left:1300px">120 ms</div><div class="lb" style="left:1413px">130 ms</div><div class="lb" style="left:1526px">140 ms</div><div class="lb" style="left:1640px">150 ms</div><div class="lb" style="left:1753px">160 ms</div>
<div class="t" style="left:1884px;top:595px;font-size:12px;color:#333;width:36px;overflow:hidden">170 ms</div>
<div class="a" style="left:0;top:590px;width:2px;height:21px;background:#999"></div>
<div class="a" style="left:1918px;top:590px;width:2px;height:21px;background:#777"></div>
<div class="a" style="left:0;top:613px;width:1606px;height:11px;background:#1a73e8"></div>
<div class="a" style="left:13px;top:615px;width:1579px;height:6px;background:#0ba552"></div>
<div class="a" style="left:1592px;top:615px;width:12px;height:6px;background:#1a9fe0"></div>
<div class="a" style="left:0;top:615px;width:10px;height:6px;background:#fff"></div>
<div class="a" style="left:10px;top:615px;width:3px;height:6px;background:#aaa"></div>
<div class="a" style="left:1608px;top:618px;width:14px;height:2px;background:#a0a0a0"></div>
<div class="a" style="left:1622px;top:618px;width:117px;height:2px;background:#1fb25a"></div>
<div class="a" style="left:1740px;top:618px;width:10px;height:2px;background:#1a9fe0"></div>
<div class="a" style="left:1755px;top:618px;width:9px;height:2px;background:#a0a0a0"></div>
<div class="a" style="left:1764px;top:618px;width:91px;height:2px;background:#1fb25a"></div>
<div class="a" style="left:1855px;top:618px;width:3px;height:2px;background:#1a9fe0"></div>
<div class="a" style="left:0;top:670px;width:1920px;height:1px;background:#cacdd1"></div>

<!-- left pane -->
<div class="a" style="left:0;top:671px;width:469px;height:27px;background:#f1f3f4;border-bottom:1px solid #cacdd1"></div>
<div class="t" style="left:5px;top:678px;font-size:12px;color:#333">Name</div>
<div class="a" style="left:0;top:699px;width:469px;height:21px;background:#fbd0ce"></div>
<div class="a" style="left:0;top:741px;width:469px;height:21px;background:#f5f5f5"></div>
<div class="bx" style="top:705px"></div><div class="nm" style="top:702px">zh-cn.min.js?v=6.3</div>
<div class="bx" style="top:726px"></div><div class="nm" style="top:723px">zh-cn.min.js?v=6.3</div>
<div class="bx" style="top:747px"></div><div class="nm" style="top:744px">Main.min.js?v=6.3</div>
<div class="a" style="left:0;top:941px;width:469px;height:28px;background:#f1f3f4;border-top:1px solid #cacdd1"></div>
<div class="t d" style="left:10px;top:947px">3 requests</div><div class="sp" style="left:75px;top:946px;height:16px"></div>
<div class="t d" style="left:85px;top:947px;letter-spacing:-.15px">1.6 kB transferred</div><div class="sp" style="left:188px;top:946px;height:16px"></div>
<div class="t d" style="left:196px;top:947px;letter-spacing:-.2px">1.2 kB resources</div>
<div class="a" style="left:468px;top:671px;width:1px;height:298px;background:#cacdd1"></div>

<!-- right pane -->
<div class="a" style="left:469px;top:671px;width:1451px;height:27px;background:#fff;border-bottom:1px solid #cacdd1"></div>
<div class="t" style="left:479px;top:677px;font-size:13px;color:#5f6368">×</div>
<div class="t" style="left:503px;top:677px;font-size:12px;color:#333">Headers</div>
<div class="a" style="left:494px;top:695px;width:63px;height:2px;background:#1a73e8"></div>
<div class="t d" style="left:566px;top:677px">Payload</div>
<div class="t d" style="left:627px;top:677px">Preview</div>
<div class="t d" style="left:687px;top:677px">Response</div>
<div class="t d" style="left:757px;top:677px">Initiator</div>
<div class="t d" style="left:818px;top:677px">Timing</div>
<div class="t d" style="left:874px;top:677px">Cookies</div>

<div class="a" style="left:469px;top:699px;width:1436px;height:27px;background:#d9d9d9"></div>
<div class="a" style="left:477px;top:711px;border:3px solid transparent;border-top:5px solid #555;border-bottom:0"></div>
<div class="t hb" style="left:486px;top:705px;font-weight:bold">General</div>

<div class="t k" style="left:495px;top:730px">Request URL:</div>
<div class="t m" style="left:576px;top:730px">http://192.168.0.108:8080/x_component_dist/lp/zh-cn.min.js?v=6.3</div>
<div class="a" style="left:573px;top:726px;width:472px;height:26px;border:3px solid #f00;border-radius:2px"></div>
<div class="t k" style="left:495px;top:752px">Request Method:</div><div class="t m" style="left:598px;top:752px">GET</div>
<div class="t k" style="left:495px;top:774px">Status Code:</div>
<div class="a" style="left:571px;top:777px;width:10px;height:10px;border-radius:50%;background:#e01010"></div>
<div class="t m" style="left:585px;top:774px">404 Not Found</div>
<div class="t k" style="left:495px;top:796px">Remote Address:</div><div class="t m" style="left:596px;top:796px">192.168.0.108:8080</div>
<div class="t k" style="left:495px;top:818px">Referrer Policy:</div><div class="t m" style="left:587px;top:818px">strict-origin-when-cross-origin</div>
<div class="a" style="left:469px;top:841px;width:1436px;height:1px;background:#cacdd1"></div>

<div class="a" style="left:477px;top:853px;border:3px solid transparent;border-top:5px solid #555;border-bottom:0"></div>
<div class="t hb" style="left:486px;top:848px">Response Headers</div>
<div class="t d" style="left:619px;top:848px">View source</div>
<div class="t k" style="left:495px;top:872px">Cache-Control:</div><div class="t m" style="left:585px;top:872px">must-revalidate,no-cache,no-store</div>
<div class="t k" style="left:495px;top:894px">Content-Length:</div><div class="t m" style="left:593px;top:894px">390</div>
<div class="t k" style="left:495px;top:916px">Content-Type:</div><div class="t m" style="left:580px;top:916px">text/html;charset=iso-8859-1</div>
<div class="a" style="left:469px;top:939px;width:1436px;height:1px;background:#cacdd1"></div>
<div class="a" style="left:477px;top:951px;border:3px solid transparent;border-top:5px solid #555;border-bottom:0"></div>
<div class="t hb" style="left:486px;top:946px">Request Headers</div>
<div class="t d" style="left:610px;top:946px">View source</div>

<div class="a" style="left:1905px;top:699px;width:15px;height:270px;background:#f1f1f1"></div>
<div class="a" style="left:1906px;top:699px;width:14px;height:148px;background:#c1c1c1"></div>
</body></html>
